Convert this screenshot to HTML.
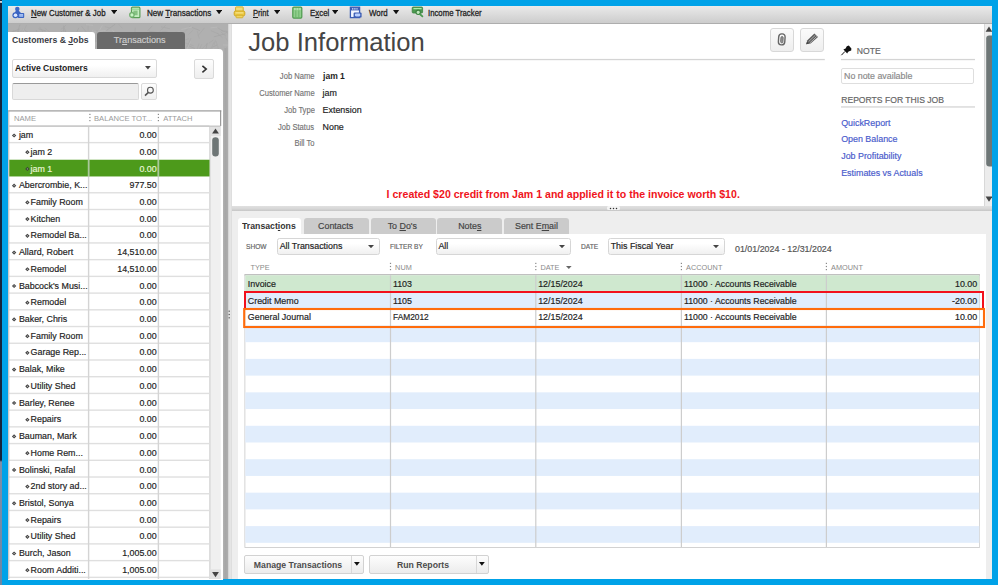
<!DOCTYPE html>
<html lang="en"><head><meta charset="utf-8"><title>Customer Center - Job Information</title>
<style>
html,body{margin:0;padding:0;width:998px;height:585px;overflow:hidden;background:#00a2e8;}
body{position:relative;font-family:"Liberation Sans",Arial,Helvetica,sans-serif;}
.b{position:absolute;display:block;}
.t{position:absolute;white-space:pre;}
u{text-decoration:underline;text-underline-offset:1px;text-decoration-thickness:0.8px;}
</style></head><body>
<div class="b" style="left:0.00px;top:0.00px;width:998.00px;height:585.00px;background:#00a2e8;"></div>
<div class="b" style="left:0.00px;top:0.00px;width:2.00px;height:585.00px;background:linear-gradient(#15233b 0,#15233b 1px,#d8d8d8 1.4px,#d8d8d8 2.4px,#15233b 3px,#15233b 460px,#7f8ea8 462px,#6a86a6 585px);"></div>
<div class="b" style="left:8.00px;top:6.00px;width:984.00px;height:573.00px;background:#eeeeee;"></div>
<div class="b" style="left:8.00px;top:6.00px;width:984.00px;height:18.00px;background:linear-gradient(#eaeaea 0,#e3e3e3 22%,#d4d4d4 70%,#cdcdcd 93%,#adadad 97%,#b4b4b4 100%);"></div>
<div class="b" style="left:8.00px;top:24.00px;width:219.60px;height:555.00px;background:#b0b0b0;"></div>
<svg class="b" style="left:8.00px;top:24.00px" width="220" height="25" viewBox="0 0 220 25"><path d="M70.9 3.8l-2.5 5.0" stroke="#a6a6a6" stroke-width="0.8" fill="none"/><path d="M80.1 1.4l-0.1 5.3" stroke="#aaaaaa" stroke-width="0.8" fill="none"/><path d="M91.6 6.0l-0.9 5.4" stroke="#a6a6a6" stroke-width="0.8" fill="none"/><path d="M207.5 15.8l-1.4 5.3" stroke="#aaaaaa" stroke-width="0.8" fill="none"/><path d="M10.9 5.5l-1.1 6.0" stroke="#aaaaaa" stroke-width="0.8" fill="none"/><path d="M31.6 2.9l6.5 9.5" stroke="#a8a8a8" stroke-width="0.8" fill="none"/><path d="M22.6 14.3l4.8 3.2" stroke="#a6a6a6" stroke-width="0.8" fill="none"/><path d="M123.6 15.5l0.1 9.3" stroke="#b9b9b9" stroke-width="0.8" fill="none"/><path d="M102.0 23.1l2.9 6.3" stroke="#a8a8a8" stroke-width="0.8" fill="none"/><path d="M153.1 6.1l-2.1 9.0" stroke="#b9b9b9" stroke-width="0.8" fill="none"/><path d="M159.7 7.2l-5.9 0.4" stroke="#aaaaaa" stroke-width="0.8" fill="none"/><path d="M36.1 8.6l-8.2 1.7" stroke="#a6a6a6" stroke-width="0.8" fill="none"/><path d="M167.4 14.3l-6.9 2.9" stroke="#b9b9b9" stroke-width="0.8" fill="none"/><path d="M130.2 14.5l1.6 11.6" stroke="#b9b9b9" stroke-width="0.8" fill="none"/><path d="M103.8 16.6l10.4 2.0" stroke="#aaaaaa" stroke-width="0.8" fill="none"/><path d="M62.3 9.6l-2.6 4.5" stroke="#aaaaaa" stroke-width="0.8" fill="none"/><path d="M77.8 15.3l0.1 6.7" stroke="#b9b9b9" stroke-width="0.8" fill="none"/><path d="M28.3 6.2l4.0 11.3" stroke="#a6a6a6" stroke-width="0.8" fill="none"/><path d="M36.4 10.0l3.9 4.7" stroke="#aaaaaa" stroke-width="0.8" fill="none"/><path d="M189.2 7.0l2.1 7.6" stroke="#aaaaaa" stroke-width="0.8" fill="none"/><path d="M209.7 3.8l5.8 3.6" stroke="#a8a8a8" stroke-width="0.8" fill="none"/><path d="M2.6 20.8l6.1 3.9" stroke="#a8a8a8" stroke-width="0.8" fill="none"/><path d="M91.7 9.2l-2.6 12.4" stroke="#a6a6a6" stroke-width="0.8" fill="none"/><path d="M100.0 21.8l-10.3 1.6" stroke="#aaaaaa" stroke-width="0.8" fill="none"/><path d="M87.2 9.9l0.5 8.2" stroke="#a8a8a8" stroke-width="0.8" fill="none"/><path d="M14.7 5.2l6.7 3.8" stroke="#a6a6a6" stroke-width="0.8" fill="none"/><path d="M22.4 14.2l-1.4 12.5" stroke="#a6a6a6" stroke-width="0.8" fill="none"/><path d="M15.4 5.2l3.8 9.3" stroke="#b9b9b9" stroke-width="0.8" fill="none"/><path d="M131.9 11.9l8.3 3.2" stroke="#aaaaaa" stroke-width="0.8" fill="none"/><path d="M105.2 7.8l9.9 4.8" stroke="#b9b9b9" stroke-width="0.8" fill="none"/><path d="M104.8 17.3l-0.3 6.6" stroke="#b9b9b9" stroke-width="0.8" fill="none"/><path d="M32.1 13.6l9.2 0.8" stroke="#a6a6a6" stroke-width="0.8" fill="none"/><path d="M152.5 6.5l2.6 5.8" stroke="#a8a8a8" stroke-width="0.8" fill="none"/><path d="M116.6 19.5l3.5 5.8" stroke="#a8a8a8" stroke-width="0.8" fill="none"/><path d="M176.5 20.5l-4.7 5.0" stroke="#aaaaaa" stroke-width="0.8" fill="none"/><path d="M77.9 0.7l7.2 0.6" stroke="#b9b9b9" stroke-width="0.8" fill="none"/><path d="M42.4 15.1l5.4 10.1" stroke="#b9b9b9" stroke-width="0.8" fill="none"/><path d="M209.1 9.1l5.2 4.4" stroke="#a8a8a8" stroke-width="0.8" fill="none"/><path d="M74.0 12.1l-9.9 0.5" stroke="#a6a6a6" stroke-width="0.8" fill="none"/><path d="M105.0 16.3l-4.6 3.3" stroke="#a6a6a6" stroke-width="0.8" fill="none"/><path d="M199.2 19.6l-6.2 6.2" stroke="#a8a8a8" stroke-width="0.8" fill="none"/><path d="M95.0 15.9l12.1 3.4" stroke="#aaaaaa" stroke-width="0.8" fill="none"/><path d="M101.4 18.6l6.0 1.7" stroke="#a8a8a8" stroke-width="0.8" fill="none"/><path d="M6.0 14.8l1.1 10.2" stroke="#aaaaaa" stroke-width="0.8" fill="none"/><path d="M143.9 8.8l-0.9 6.0" stroke="#a6a6a6" stroke-width="0.8" fill="none"/><path d="M175.1 18.2l10.4 3.5" stroke="#a8a8a8" stroke-width="0.8" fill="none"/><path d="M95.0 21.8l-5.7 3.5" stroke="#b9b9b9" stroke-width="0.8" fill="none"/><path d="M46.6 12.5l-5.6 5.1" stroke="#aaaaaa" stroke-width="0.8" fill="none"/><path d="M182.7 1.5l-8.3 8.9" stroke="#aaaaaa" stroke-width="0.8" fill="none"/><path d="M181.1 22.0l5.7 2.5" stroke="#a6a6a6" stroke-width="0.8" fill="none"/><path d="M191.1 19.4l-3.7 10.6" stroke="#a8a8a8" stroke-width="0.8" fill="none"/><path d="M37.7 11.8l-6.1 7.2" stroke="#b9b9b9" stroke-width="0.8" fill="none"/><path d="M149.4 13.3l0.6 11.2" stroke="#a6a6a6" stroke-width="0.8" fill="none"/><path d="M54.4 6.9l-6.8 5.9" stroke="#a6a6a6" stroke-width="0.8" fill="none"/><path d="M166.4 22.8l1.8 9.7" stroke="#a8a8a8" stroke-width="0.8" fill="none"/><path d="M151.7 11.3l-0.9 8.8" stroke="#a8a8a8" stroke-width="0.8" fill="none"/><path d="M153.1 21.9l-7.0 1.3" stroke="#a8a8a8" stroke-width="0.8" fill="none"/><path d="M184.0 3.4l7.9 3.2" stroke="#a6a6a6" stroke-width="0.8" fill="none"/><path d="M147.0 10.7l5.8 4.6" stroke="#a6a6a6" stroke-width="0.8" fill="none"/><path d="M196.4 3.9l-6.5 8.0" stroke="#a8a8a8" stroke-width="0.8" fill="none"/><path d="M55.4 3.4l1.1 10.9" stroke="#a6a6a6" stroke-width="0.8" fill="none"/><path d="M87.2 12.2l-11.7 0.4" stroke="#a8a8a8" stroke-width="0.8" fill="none"/><path d="M154.7 24.9l2.5 8.0" stroke="#b9b9b9" stroke-width="0.8" fill="none"/><path d="M69.8 18.1l9.4 0.6" stroke="#aaaaaa" stroke-width="0.8" fill="none"/><path d="M154.0 9.6l-0.4 7.4" stroke="#a6a6a6" stroke-width="0.8" fill="none"/><path d="M24.7 23.0l9.0 7.9" stroke="#a6a6a6" stroke-width="0.8" fill="none"/><path d="M58.2 1.0l-5.5 4.6" stroke="#a8a8a8" stroke-width="0.8" fill="none"/><path d="M179.5 21.2l-6.6 10.7" stroke="#aaaaaa" stroke-width="0.8" fill="none"/><path d="M32.7 23.0l-2.3 10.3" stroke="#a6a6a6" stroke-width="0.8" fill="none"/><path d="M61.1 20.0l10.2 6.6" stroke="#b9b9b9" stroke-width="0.8" fill="none"/><path d="M205.5 15.9l-4.6 3.3" stroke="#a8a8a8" stroke-width="0.8" fill="none"/><path d="M14.6 21.6l1.1 7.6" stroke="#aaaaaa" stroke-width="0.8" fill="none"/><path d="M202.9 6.7l8.5 3.6" stroke="#a8a8a8" stroke-width="0.8" fill="none"/><path d="M205.4 24.2l4.4 4.7" stroke="#b9b9b9" stroke-width="0.8" fill="none"/><path d="M137.7 13.3l6.8 5.2" stroke="#a8a8a8" stroke-width="0.8" fill="none"/><path d="M59.2 20.1l-5.3 0.1" stroke="#a6a6a6" stroke-width="0.8" fill="none"/><path d="M160.5 13.8l7.3 4.9" stroke="#aaaaaa" stroke-width="0.8" fill="none"/><path d="M23.3 20.5l1.9 8.8" stroke="#aaaaaa" stroke-width="0.8" fill="none"/><path d="M212.5 7.7l5.3 4.3" stroke="#a8a8a8" stroke-width="0.8" fill="none"/><path d="M182.3 17.7l-3.4 7.5" stroke="#b9b9b9" stroke-width="0.8" fill="none"/><path d="M215.0 20.9l10.0 0.4" stroke="#b9b9b9" stroke-width="0.8" fill="none"/><path d="M94.3 1.4l-4.0 7.0" stroke="#b9b9b9" stroke-width="0.8" fill="none"/><path d="M131.1 17.3l6.4 0.9" stroke="#b9b9b9" stroke-width="0.8" fill="none"/><path d="M97.6 6.6l-12.7 1.5" stroke="#b9b9b9" stroke-width="0.8" fill="none"/><path d="M53.5 24.1l4.4 6.5" stroke="#a6a6a6" stroke-width="0.8" fill="none"/><path d="M73.4 2.1l6.6 7.9" stroke="#a8a8a8" stroke-width="0.8" fill="none"/><path d="M110.5 0.1l3.9 4.2" stroke="#aaaaaa" stroke-width="0.8" fill="none"/><path d="M128.5 9.8l5.9 8.1" stroke="#a6a6a6" stroke-width="0.8" fill="none"/><path d="M128.2 13.2l-7.3 7.2" stroke="#aaaaaa" stroke-width="0.8" fill="none"/><path d="M167.4 18.0l0.1 7.3" stroke="#a8a8a8" stroke-width="0.8" fill="none"/><path d="M9.6 20.9l-9.4 3.3" stroke="#a8a8a8" stroke-width="0.8" fill="none"/><path d="M199.3 18.8l-2.5 11.2" stroke="#a6a6a6" stroke-width="0.8" fill="none"/><path d="M181.0 14.6l-9.9 3.5" stroke="#a8a8a8" stroke-width="0.8" fill="none"/><path d="M18.6 1.0l-5.3 11.5" stroke="#aaaaaa" stroke-width="0.8" fill="none"/><path d="M183.0 14.0l-3.9 9.2" stroke="#a8a8a8" stroke-width="0.8" fill="none"/><path d="M107.2 0.1l-8.8 6.5" stroke="#a6a6a6" stroke-width="0.8" fill="none"/><path d="M144.4 1.7l-4.8 5.2" stroke="#a6a6a6" stroke-width="0.8" fill="none"/><path d="M185.3 5.9l-4.9 4.7" stroke="#aaaaaa" stroke-width="0.8" fill="none"/><path d="M108.2 9.6l0.7 10.4" stroke="#a6a6a6" stroke-width="0.8" fill="none"/><path d="M135.1 16.1l6.0 1.5" stroke="#b9b9b9" stroke-width="0.8" fill="none"/><path d="M142.7 17.3l-2.3 5.6" stroke="#aaaaaa" stroke-width="0.8" fill="none"/><path d="M13.3 6.7l-5.4 9.0" stroke="#aaaaaa" stroke-width="0.8" fill="none"/><path d="M63.7 12.9l1.0 8.7" stroke="#a6a6a6" stroke-width="0.8" fill="none"/><path d="M217.5 13.7l3.2 4.7" stroke="#aaaaaa" stroke-width="0.8" fill="none"/><path d="M3.8 11.5l-10.8 6.8" stroke="#aaaaaa" stroke-width="0.8" fill="none"/><path d="M217.7 9.7l-12.0 3.2" stroke="#a6a6a6" stroke-width="0.8" fill="none"/><path d="M127.3 3.5l-1.0 12.6" stroke="#a8a8a8" stroke-width="0.8" fill="none"/><path d="M132.1 15.8l3.8 4.5" stroke="#b9b9b9" stroke-width="0.8" fill="none"/><path d="M50.7 22.4l0.2 5.2" stroke="#a6a6a6" stroke-width="0.8" fill="none"/><path d="M208.0 17.0l3.2 10.3" stroke="#aaaaaa" stroke-width="0.8" fill="none"/><path d="M75.3 7.9l-4.4 2.4" stroke="#b9b9b9" stroke-width="0.8" fill="none"/><path d="M183.8 3.0l-10.4 2.5" stroke="#b9b9b9" stroke-width="0.8" fill="none"/><path d="M55.5 1.6l4.0 11.3" stroke="#a6a6a6" stroke-width="0.8" fill="none"/><path d="M79.0 10.7l3.5 4.1" stroke="#a6a6a6" stroke-width="0.8" fill="none"/><path d="M11.3 16.5l-2.5 5.6" stroke="#b9b9b9" stroke-width="0.8" fill="none"/><path d="M95.5 7.9l-8.5 7.4" stroke="#aaaaaa" stroke-width="0.8" fill="none"/><path d="M193.7 20.3l-4.9 11.3" stroke="#a8a8a8" stroke-width="0.8" fill="none"/><path d="M157.6 1.2l-5.7 6.4" stroke="#a8a8a8" stroke-width="0.8" fill="none"/><path d="M141.1 7.2l12.3 1.9" stroke="#a8a8a8" stroke-width="0.8" fill="none"/><path d="M37.4 10.4l4.5 5.5" stroke="#b9b9b9" stroke-width="0.8" fill="none"/><path d="M89.0 6.0l0.5 10.3" stroke="#a6a6a6" stroke-width="0.8" fill="none"/><path d="M36.6 4.0l9.7 7.4" stroke="#aaaaaa" stroke-width="0.8" fill="none"/><path d="M120.5 11.3l5.6 9.6" stroke="#aaaaaa" stroke-width="0.8" fill="none"/><path d="M30.6 4.8l7.4 2.2" stroke="#a6a6a6" stroke-width="0.8" fill="none"/><path d="M69.9 9.2l-5.5 3.7" stroke="#a6a6a6" stroke-width="0.8" fill="none"/><path d="M164.2 10.3l2.5 8.9" stroke="#aaaaaa" stroke-width="0.8" fill="none"/><path d="M59.2 18.8l0.1 9.6" stroke="#b9b9b9" stroke-width="0.8" fill="none"/><path d="M27.6 12.6l-4.7 10.9" stroke="#a8a8a8" stroke-width="0.8" fill="none"/><path d="M20.3 22.4l3.6 9.5" stroke="#aaaaaa" stroke-width="0.8" fill="none"/><path d="M208.9 21.2l-4.8 2.0" stroke="#a6a6a6" stroke-width="0.8" fill="none"/><path d="M93.1 19.1l-10.4 7.4" stroke="#aaaaaa" stroke-width="0.8" fill="none"/><path d="M0.0 9.8l-11.3 2.6" stroke="#aaaaaa" stroke-width="0.8" fill="none"/><path d="M212.9 6.2l5.9 2.1" stroke="#a6a6a6" stroke-width="0.8" fill="none"/><path d="M206.2 18.0l-5.0 9.9" stroke="#aaaaaa" stroke-width="0.8" fill="none"/><path d="M18.6 19.4l6.0 0.0" stroke="#a6a6a6" stroke-width="0.8" fill="none"/><path d="M141.4 7.6l6.5 2.7" stroke="#aaaaaa" stroke-width="0.8" fill="none"/><path d="M153.0 2.8l9.0 2.0" stroke="#a8a8a8" stroke-width="0.8" fill="none"/><path d="M85.0 5.6l-1.6 4.8" stroke="#b9b9b9" stroke-width="0.8" fill="none"/><path d="M218.2 7.0l6.4 9.8" stroke="#a8a8a8" stroke-width="0.8" fill="none"/><path d="M104.1 5.9l9.1 8.9" stroke="#b9b9b9" stroke-width="0.8" fill="none"/><path d="M12.1 4.9l-9.5 3.6" stroke="#a6a6a6" stroke-width="0.8" fill="none"/><path d="M56.3 16.7l-6.6 1.6" stroke="#a6a6a6" stroke-width="0.8" fill="none"/><path d="M152.4 18.0l3.4 7.4" stroke="#a6a6a6" stroke-width="0.8" fill="none"/><path d="M174.6 18.5l-0.1 6.6" stroke="#a8a8a8" stroke-width="0.8" fill="none"/><path d="M68.3 20.5l5.1 4.5" stroke="#b9b9b9" stroke-width="0.8" fill="none"/><path d="M23.9 15.6l-4.1 11.5" stroke="#aaaaaa" stroke-width="0.8" fill="none"/><path d="M91.3 16.6l-6.1 1.0" stroke="#aaaaaa" stroke-width="0.8" fill="none"/><path d="M11.9 0.6l-2.5 7.9" stroke="#a6a6a6" stroke-width="0.8" fill="none"/><path d="M40.3 11.2l-4.6 5.9" stroke="#a6a6a6" stroke-width="0.8" fill="none"/><path d="M218.5 23.3l3.3 5.6" stroke="#aaaaaa" stroke-width="0.8" fill="none"/><path d="M7.0 16.6l3.0 7.4" stroke="#b9b9b9" stroke-width="0.8" fill="none"/><path d="M96.9 2.7l5.5 1.4" stroke="#aaaaaa" stroke-width="0.8" fill="none"/><path d="M209.3 3.1l-6.6 0.7" stroke="#b9b9b9" stroke-width="0.8" fill="none"/><path d="M168.4 7.7l-4.7 3.3" stroke="#aaaaaa" stroke-width="0.8" fill="none"/><path d="M42.9 13.5l1.3 7.5" stroke="#aaaaaa" stroke-width="0.8" fill="none"/><path d="M6.6 10.3l-9.2 6.2" stroke="#a6a6a6" stroke-width="0.8" fill="none"/><path d="M82.2 11.6l-4.5 3.2" stroke="#a8a8a8" stroke-width="0.8" fill="none"/><path d="M163.7 22.5l3.5 6.3" stroke="#a6a6a6" stroke-width="0.8" fill="none"/><path d="M57.4 17.9l3.9 6.0" stroke="#a6a6a6" stroke-width="0.8" fill="none"/><path d="M158.0 14.9l-10.3 7.2" stroke="#a6a6a6" stroke-width="0.8" fill="none"/><path d="M5.3 5.8l1.0 12.6" stroke="#aaaaaa" stroke-width="0.8" fill="none"/><path d="M173.0 22.8l-5.1 3.3" stroke="#aaaaaa" stroke-width="0.8" fill="none"/><path d="M40.1 20.1l-7.9 8.5" stroke="#a8a8a8" stroke-width="0.8" fill="none"/><path d="M133.0 8.2l4.2 6.7" stroke="#a6a6a6" stroke-width="0.8" fill="none"/><path d="M112.1 9.8l7.2 4.0" stroke="#a6a6a6" stroke-width="0.8" fill="none"/><path d="M105.5 13.6l7.4 4.1" stroke="#a6a6a6" stroke-width="0.8" fill="none"/><path d="M216.3 6.6l5.6 1.5" stroke="#aaaaaa" stroke-width="0.8" fill="none"/><path d="M216.5 24.3l5.2 3.1" stroke="#aaaaaa" stroke-width="0.8" fill="none"/><path d="M135.8 16.9l-8.3 8.4" stroke="#a6a6a6" stroke-width="0.8" fill="none"/><path d="M170.8 7.3l4.6 5.5" stroke="#b9b9b9" stroke-width="0.8" fill="none"/></svg>
<div class="b" style="left:223.40px;top:48.00px;width:4.20px;height:531.00px;background:linear-gradient(90deg,#b2b2b2,#a6a6a6 45%,#adadad);"></div>
<div class="b" style="left:227.50px;top:24.00px;width:4.00px;height:555.00px;background:linear-gradient(90deg,#d0d0d0,#e9e9e9 50%,#dadada);"></div>
<div class="t" style="top:5.50px;font-size:9.8px;line-height:14px;color:#222;left:31.20px;transform:scaleX(0.805);transform-origin:0 50%;-webkit-text-stroke:0.3px #222;text-underline-offset:0.3px;"><u>N</u>ew Customer &amp; Job</div>
<svg class="b" style="left:110.60px;top:10.20px" width="6.2" height="4.3" viewBox="0 0 6.2 4.3"><path d="M0 0H6.2L3.1 4.3Z" fill="#111"/></svg>
<div class="t" style="top:5.50px;font-size:9.8px;line-height:14px;color:#222;left:146.60px;transform:scaleX(0.827);transform-origin:0 50%;-webkit-text-stroke:0.3px #222;text-underline-offset:0.3px;">New <u>T</u>ransactions</div>
<svg class="b" style="left:216.00px;top:10.20px" width="6.2" height="4.3" viewBox="0 0 6.2 4.3"><path d="M0 0H6.2L3.1 4.3Z" fill="#111"/></svg>
<div class="t" style="top:5.50px;font-size:9.8px;line-height:14px;color:#222;left:252.70px;transform:scaleX(0.775);transform-origin:0 50%;-webkit-text-stroke:0.3px #222;text-underline-offset:0.3px;"><u>P</u>rint</div>
<svg class="b" style="left:273.80px;top:10.20px" width="6.2" height="4.3" viewBox="0 0 6.2 4.3"><path d="M0 0H6.2L3.1 4.3Z" fill="#111"/></svg>
<div class="t" style="top:5.50px;font-size:9.8px;line-height:14px;color:#222;left:309.60px;transform:scaleX(0.805);transform-origin:0 50%;-webkit-text-stroke:0.3px #222;text-underline-offset:0.3px;">E<u>x</u>cel</div>
<svg class="b" style="left:332.20px;top:10.20px" width="6.2" height="4.3" viewBox="0 0 6.2 4.3"><path d="M0 0H6.2L3.1 4.3Z" fill="#111"/></svg>
<div class="t" style="top:5.50px;font-size:9.8px;line-height:14px;color:#222;left:369.00px;transform:scaleX(0.805);transform-origin:0 50%;-webkit-text-stroke:0.3px #222;text-underline-offset:0.3px;">Word</div>
<svg class="b" style="left:393.40px;top:10.20px" width="6.2" height="4.3" viewBox="0 0 6.2 4.3"><path d="M0 0H6.2L3.1 4.3Z" fill="#111"/></svg>
<div class="t" style="top:5.50px;font-size:9.8px;line-height:14px;color:#222;left:428.40px;transform:scaleX(0.793);transform-origin:0 50%;-webkit-text-stroke:0.3px #222;text-underline-offset:0.3px;">Income Tracker</div>
<svg class="b" style="left:11.00px;top:6.00px" width="15" height="13" viewBox="0 0 15 13"><circle cx="6.3" cy="2.9" r="2.25" fill="#3f69c6"/>
<path d="M5 4.4H7.6L10.4 7.4L2.4 9Z" fill="#3a64c2"/>
<circle cx="4.4" cy="9.3" r="3" fill="#3a64c2"/>
<rect x="6.8" y="6.9" width="6.4" height="5" rx="0.9" fill="#3a64c2"/>
<rect x="8.3" y="8.1" width="3.8" height="2.6" fill="#b4ccf8"/><path d="M8.3 9.4H12.1" stroke="#7fa2e8" stroke-width=".6"/>
<circle cx="4.5" cy="9.3" r="1.8" fill="#dce8ff"/></svg>
<svg class="b" style="left:127.00px;top:6.00px" width="15" height="13" viewBox="0 0 15 13"><rect x="4.5" y="1.2" width="8.4" height="10.5" rx="1" fill="#c4edc0" stroke="#5a9e56" stroke-width="1.2"/>
<rect x="6.4" y="4.6" width="4.2" height="4.6" fill="#86c283"/>
<path d="M4.6 3.2H12.2" stroke="#8fd08b" stroke-width="1"/>
<circle cx="4.9" cy="8.9" r="2.8" fill="#6fae6b"/><circle cx="4.9" cy="8.9" r="1.6" fill="#c8f5c4"/></svg>
<svg class="b" style="left:233.00px;top:6.00px" width="13" height="13" viewBox="0 0 13 13"><rect x="2.6" y="0.9" width="7.6" height="4.6" rx="0.6" fill="#f2dc7c" stroke="#d2ae2a" stroke-width="1"/>
<rect x="1.2" y="5" width="10.6" height="4.8" rx="1.4" fill="#ecc83e" stroke="#cfa622" stroke-width="1"/>
<rect x="3" y="9.2" width="7" height="2.6" rx="0.8" fill="#f0d462" stroke="#d2ae2a" stroke-width=".9"/>
<rect x="2.4" y="6.4" width="8" height="1" fill="#f8e9a0"/></svg>
<svg class="b" style="left:291.00px;top:6.00px" width="13" height="13" viewBox="0 0 13 13"><rect x="1.8" y="1.1" width="9" height="11" rx="1" fill="#8fcf8c" stroke="#4d9a4d" stroke-width="1.2"/>
<path d="M4.8 4.4V11.4M7.8 4.4V11.4" stroke="#6cb36a" stroke-width="1"/><path d="M3 3H10" stroke="#d8f2d6" stroke-width="1.2" stroke-dasharray="1.6 1"/></svg>
<svg class="b" style="left:349.00px;top:6.00px" width="14" height="13" viewBox="0 0 14 13"><rect x="1.4" y="1.2" width="9.2" height="10.4" fill="#f2f6ff" stroke="#3b5db4" stroke-width="1.3"/>
<rect x="1.4" y="1.2" width="9.2" height="3.2" fill="#3b5db4"/><path d="M3 2.8H8.6" stroke="#dbe6ff" stroke-width="1.2" stroke-dasharray="1.4 .8"/>
<rect x="4.6" y="6.4" width="8" height="5.2" rx="1.2" fill="#3b5db4"/><rect x="5.8" y="7.6" width="5.6" height="2.8" rx="1.3" fill="#b9d0ff"/></svg>
<svg class="b" style="left:411.00px;top:6.00px" width="14" height="12" viewBox="0 0 14 12"><rect x="1.2" y="1" width="10.4" height="6" rx="1" fill="#4c9a50" stroke="#3c8140" stroke-width=".8"/>
<path d="M2.4 2.6H10.6" stroke="#a9ecaa" stroke-width="1.3"/>
<circle cx="7.2" cy="6.3" r="2.2" fill="#bfe9bd" stroke="#3c8140" stroke-width="1.1"/>
<path d="M8.8 8L11.4 10.4" stroke="#4c9a50" stroke-width="1.8" stroke-linecap="round"/></svg>
<div class="b" style="left:8.00px;top:31.80px;width:87.00px;height:18.00px;background:#fff;border-radius:0 3px 0 0;"></div>
<div class="b" style="left:97.00px;top:32.00px;width:88.00px;height:16.60px;background:#6a6a6a;border-radius:3px 3px 0 0;"></div>
<div class="t" style="top:33.28px;font-size:9px;line-height:14px;color:#3a3c44;font-weight:700;left:11.60px;transform:scaleX(0.962);transform-origin:0 50%;">Customers &amp; <u>J</u>obs</div>
<div class="t" style="top:33.05px;font-size:9.1px;line-height:14px;color:#cdcdcd;left:-10.30px;width:300px;text-align:center;-webkit-text-stroke:0.18px #cdcdcd;">Tr<u>a</u>nsactions</div>
<div class="b" style="left:8.00px;top:48.50px;width:215.40px;height:531.00px;background:#fff;border-radius:0 4px 0 0;"></div>
<div class="b" style="left:12.30px;top:59.00px;width:144.80px;height:18.80px;background:linear-gradient(#fff 30%,#f0f0f0);border:1px solid #dadada;border-radius:2px;box-sizing:border-box;"></div>
<div class="t" style="top:61.08px;font-size:9px;line-height:14px;color:#1c1c1c;font-weight:700;left:14.70px;transform:scaleX(0.95);transform-origin:0 50%;">Active Customers</div>
<svg class="b" style="left:145.20px;top:66.30px" width="5.8" height="3.6" viewBox="0 0 5.8 3.6"><path d="M0 0H5.8L2.9 3.6Z" fill="#444"/></svg>
<div class="b" style="left:194.40px;top:59.40px;width:19.40px;height:19.40px;background:linear-gradient(#fdfdfd,#eeeeee);border:1px solid #dadada;border-radius:2px;box-sizing:border-box;"></div>
<svg class="b" style="left:200.00px;top:64.00px" width="9" height="10" viewBox="0 0 9 10"><path d="M2.4 1.9L6.2 5.1L2.4 8.3" fill="none" stroke="#333" stroke-width="1.6"/></svg>
<div class="b" style="left:12.20px;top:83.40px;width:126.80px;height:16.20px;background:#eeeeee;border:1px solid #d8d8d8;border-top:1px solid #999;border-radius:2px;box-sizing:border-box;"></div>
<div class="b" style="left:140.80px;top:83.30px;width:16.00px;height:16.60px;background:linear-gradient(#fdfdfd,#f0f0f0);border:1px solid #dadada;border-radius:2px;box-sizing:border-box;"></div>
<svg class="b" style="left:143.00px;top:85.00px" width="13" height="13" viewBox="0 0 13 13"><circle cx="7.4" cy="5.2" r="2.9" fill="none" stroke="#555" stroke-width="1.1"/><path d="M5.4 7.4L2 10.6" stroke="#555" stroke-width="1.5"/></svg>
<svg class="b" style="left:8.00px;top:108.00px" width="216" height="471" viewBox="0 0 216 471"><rect x="201.60" y="18.00" width="11.20" height="453.00" fill="#f0f0f0" /><rect x="201.40" y="18.00" width="1.00" height="453.00" fill="#cacaca" /><rect x="202.40" y="18.00" width="10.40" height="10.00" fill="#e2e2e2" /><rect x="202.40" y="461.40" width="10.40" height="9.60" fill="#e2e2e2" /><rect x="1.10" y="51.74" width="200.40" height="16.72" fill="#4d9a1b" /><rect x="1.10" y="17.20" width="200.40" height="1.40" fill="#dfdfdf" /><rect x="1.10" y="33.92" width="200.40" height="1.40" fill="#dfdfdf" /><rect x="1.10" y="84.08" width="200.40" height="1.40" fill="#dfdfdf" /><rect x="1.10" y="100.80" width="200.40" height="1.40" fill="#dfdfdf" /><rect x="1.10" y="117.52" width="200.40" height="1.40" fill="#dfdfdf" /><rect x="1.10" y="134.24" width="200.40" height="1.40" fill="#dfdfdf" /><rect x="1.10" y="150.96" width="200.40" height="1.40" fill="#dfdfdf" /><rect x="1.10" y="167.68" width="200.40" height="1.40" fill="#dfdfdf" /><rect x="1.10" y="184.40" width="200.40" height="1.40" fill="#dfdfdf" /><rect x="1.10" y="201.12" width="200.40" height="1.40" fill="#dfdfdf" /><rect x="1.10" y="217.84" width="200.40" height="1.40" fill="#dfdfdf" /><rect x="1.10" y="234.56" width="200.40" height="1.40" fill="#dfdfdf" /><rect x="1.10" y="251.28" width="200.40" height="1.40" fill="#dfdfdf" /><rect x="1.10" y="268.00" width="200.40" height="1.40" fill="#dfdfdf" /><rect x="1.10" y="284.72" width="200.40" height="1.40" fill="#dfdfdf" /><rect x="1.10" y="301.44" width="200.40" height="1.40" fill="#dfdfdf" /><rect x="1.10" y="318.16" width="200.40" height="1.40" fill="#dfdfdf" /><rect x="1.10" y="334.88" width="200.40" height="1.40" fill="#dfdfdf" /><rect x="1.10" y="351.60" width="200.40" height="1.40" fill="#dfdfdf" /><rect x="1.10" y="368.32" width="200.40" height="1.40" fill="#dfdfdf" /><rect x="1.10" y="385.04" width="200.40" height="1.40" fill="#dfdfdf" /><rect x="1.10" y="401.76" width="200.40" height="1.40" fill="#dfdfdf" /><rect x="1.10" y="418.48" width="200.40" height="1.40" fill="#dfdfdf" /><rect x="1.10" y="435.20" width="200.40" height="1.40" fill="#dfdfdf" /><rect x="1.10" y="451.92" width="200.40" height="1.40" fill="#dfdfdf" /><rect x="1.10" y="468.64" width="200.40" height="1.40" fill="#dfdfdf" /><rect x="79.90" y="18.00" width="1.40" height="453.00" fill="#d4d4d4" /><rect x="79.90" y="51.84" width="1.40" height="16.72" fill="#a9c99a" /><rect x="149.70" y="18.00" width="1.40" height="453.00" fill="#d4d4d4" /><rect x="149.70" y="51.84" width="1.40" height="16.72" fill="#a9c99a" /><rect x="0.20" y="2.40" width="1.10" height="469.00" fill="#bebebe" /><rect x="0.30" y="2.30" width="213.00" height="1.20" fill="#9a9a9a" /><rect x="212.10" y="2.60" width="1.10" height="15.40" fill="#8f8f8f" /><rect x="1.10" y="17.50" width="211.20" height="1.40" fill="#c8c8c8" /><rect x="81.30" y="5.80" width="1.20" height="1.20" fill="#8a8a8a" /><rect x="81.30" y="8.90" width="1.20" height="1.20" fill="#8a8a8a" /><rect x="81.30" y="12.00" width="1.20" height="1.20" fill="#8a8a8a" /><rect x="149.80" y="5.80" width="1.20" height="1.20" fill="#8a8a8a" /><rect x="149.80" y="8.90" width="1.20" height="1.20" fill="#8a8a8a" /><rect x="149.80" y="12.00" width="1.20" height="1.20" fill="#8a8a8a" /><path d="M207.5 20.4L210.9 25.6H204.1Z" fill="#444"/><rect x="204.2" y="29.3" width="6.6" height="19.2" rx="3.2" fill="#6e7676"/><path d="M204.1 464H210.9L207.5 469.2Z" fill="#444"/><path d="M6.10 25.40L8.30 27.50L6.10 29.60L3.90 27.50Z" fill="#444"/><rect x="5.60" y="27.00" width="1" height="1" fill="#cfcfcf"/><path d="M19.40 42.12L21.60 44.22L19.40 46.32L17.20 44.22Z" fill="#444"/><rect x="18.90" y="43.72" width="1" height="1" fill="#cfcfcf"/><path d="M19.40 58.84L21.60 60.94L19.40 63.04L17.20 60.94Z" fill="#3c4636"/><rect x="18.90" y="60.44" width="1" height="1" fill="#a8c898"/><path d="M6.10 75.56L8.30 77.66L6.10 79.76L3.90 77.66Z" fill="#444"/><rect x="5.60" y="77.16" width="1" height="1" fill="#cfcfcf"/><path d="M19.40 92.28L21.60 94.38L19.40 96.48L17.20 94.38Z" fill="#444"/><rect x="18.90" y="93.88" width="1" height="1" fill="#cfcfcf"/><path d="M19.40 109.00L21.60 111.10L19.40 113.20L17.20 111.10Z" fill="#444"/><rect x="18.90" y="110.60" width="1" height="1" fill="#cfcfcf"/><path d="M19.40 125.72L21.60 127.82L19.40 129.92L17.20 127.82Z" fill="#444"/><rect x="18.90" y="127.32" width="1" height="1" fill="#cfcfcf"/><path d="M6.10 142.44L8.30 144.54L6.10 146.64L3.90 144.54Z" fill="#444"/><rect x="5.60" y="144.04" width="1" height="1" fill="#cfcfcf"/><path d="M19.40 159.16L21.60 161.26L19.40 163.36L17.20 161.26Z" fill="#444"/><rect x="18.90" y="160.76" width="1" height="1" fill="#cfcfcf"/><path d="M6.10 175.88L8.30 177.98L6.10 180.08L3.90 177.98Z" fill="#444"/><rect x="5.60" y="177.48" width="1" height="1" fill="#cfcfcf"/><path d="M19.40 192.60L21.60 194.70L19.40 196.80L17.20 194.70Z" fill="#444"/><rect x="18.90" y="194.20" width="1" height="1" fill="#cfcfcf"/><path d="M6.10 209.32L8.30 211.42L6.10 213.52L3.90 211.42Z" fill="#444"/><rect x="5.60" y="210.92" width="1" height="1" fill="#cfcfcf"/><path d="M19.40 226.04L21.60 228.14L19.40 230.24L17.20 228.14Z" fill="#444"/><rect x="18.90" y="227.64" width="1" height="1" fill="#cfcfcf"/><path d="M19.40 242.76L21.60 244.86L19.40 246.96L17.20 244.86Z" fill="#444"/><rect x="18.90" y="244.36" width="1" height="1" fill="#cfcfcf"/><path d="M6.10 259.48L8.30 261.58L6.10 263.68L3.90 261.58Z" fill="#444"/><rect x="5.60" y="261.08" width="1" height="1" fill="#cfcfcf"/><path d="M19.40 276.20L21.60 278.30L19.40 280.40L17.20 278.30Z" fill="#444"/><rect x="18.90" y="277.80" width="1" height="1" fill="#cfcfcf"/><path d="M6.10 292.92L8.30 295.02L6.10 297.12L3.90 295.02Z" fill="#444"/><rect x="5.60" y="294.52" width="1" height="1" fill="#cfcfcf"/><path d="M19.40 309.64L21.60 311.74L19.40 313.84L17.20 311.74Z" fill="#444"/><rect x="18.90" y="311.24" width="1" height="1" fill="#cfcfcf"/><path d="M6.10 326.36L8.30 328.46L6.10 330.56L3.90 328.46Z" fill="#444"/><rect x="5.60" y="327.96" width="1" height="1" fill="#cfcfcf"/><path d="M19.40 343.08L21.60 345.18L19.40 347.28L17.20 345.18Z" fill="#444"/><rect x="18.90" y="344.68" width="1" height="1" fill="#cfcfcf"/><path d="M6.10 359.80L8.30 361.90L6.10 364.00L3.90 361.90Z" fill="#444"/><rect x="5.60" y="361.40" width="1" height="1" fill="#cfcfcf"/><path d="M19.40 376.52L21.60 378.62L19.40 380.72L17.20 378.62Z" fill="#444"/><rect x="18.90" y="378.12" width="1" height="1" fill="#cfcfcf"/><path d="M6.10 393.24L8.30 395.34L6.10 397.44L3.90 395.34Z" fill="#444"/><rect x="5.60" y="394.84" width="1" height="1" fill="#cfcfcf"/><path d="M19.40 409.96L21.60 412.06L19.40 414.16L17.20 412.06Z" fill="#444"/><rect x="18.90" y="411.56" width="1" height="1" fill="#cfcfcf"/><path d="M19.40 426.68L21.60 428.78L19.40 430.88L17.20 428.78Z" fill="#444"/><rect x="18.90" y="428.28" width="1" height="1" fill="#cfcfcf"/><path d="M6.10 443.40L8.30 445.50L6.10 447.60L3.90 445.50Z" fill="#444"/><rect x="5.60" y="445.00" width="1" height="1" fill="#cfcfcf"/><path d="M19.40 460.12L21.60 462.22L19.40 464.32L17.20 462.22Z" fill="#444"/><rect x="18.90" y="461.72" width="1" height="1" fill="#cfcfcf"/></svg>
<div class="t" style="top:112.37px;font-size:7.6px;line-height:14px;color:#9a9a9a;letter-spacing:0.02px;left:14.00px;">NAME</div>
<div class="t" style="top:112.37px;font-size:7.6px;line-height:14px;color:#9a9a9a;letter-spacing:0.02px;left:94.00px;">BALANCE TOT...</div>
<div class="t" style="top:112.37px;font-size:7.6px;line-height:14px;color:#9a9a9a;letter-spacing:0.02px;left:163.20px;">ATTACH</div>
<div class="t" style="top:128.12px;font-size:8.9px;line-height:14px;color:#1e1e1e;left:18.90px;-webkit-text-stroke:0.18px #1e1e1e;">jam</div>
<div class="t" style="top:128.12px;font-size:8.9px;line-height:14px;color:#1e1e1e;right:841.30px;text-align:right;-webkit-text-stroke:0.18px #1e1e1e;">0.00</div>
<div class="t" style="top:144.84px;font-size:8.9px;line-height:14px;color:#1e1e1e;left:30.60px;-webkit-text-stroke:0.18px #1e1e1e;">jam 2</div>
<div class="t" style="top:144.84px;font-size:8.9px;line-height:14px;color:#1e1e1e;right:841.30px;text-align:right;-webkit-text-stroke:0.18px #1e1e1e;">0.00</div>
<div class="t" style="top:161.56px;font-size:8.9px;line-height:14px;color:#eaf6d6;left:30.60px;-webkit-text-stroke:0.18px #eaf6d6;">jam 1</div>
<div class="t" style="top:161.56px;font-size:8.9px;line-height:14px;color:#eaf6d6;right:841.30px;text-align:right;-webkit-text-stroke:0.18px #eaf6d6;">0.00</div>
<div class="t" style="top:178.28px;font-size:8.9px;line-height:14px;color:#1e1e1e;left:18.90px;-webkit-text-stroke:0.18px #1e1e1e;">Abercrombie, K...</div>
<div class="t" style="top:178.28px;font-size:8.9px;line-height:14px;color:#1e1e1e;right:841.30px;text-align:right;-webkit-text-stroke:0.18px #1e1e1e;">977.50</div>
<div class="t" style="top:195.00px;font-size:8.9px;line-height:14px;color:#1e1e1e;left:30.60px;-webkit-text-stroke:0.18px #1e1e1e;">Family Room</div>
<div class="t" style="top:195.00px;font-size:8.9px;line-height:14px;color:#1e1e1e;right:841.30px;text-align:right;-webkit-text-stroke:0.18px #1e1e1e;">0.00</div>
<div class="t" style="top:211.72px;font-size:8.9px;line-height:14px;color:#1e1e1e;left:30.60px;-webkit-text-stroke:0.18px #1e1e1e;">Kitchen</div>
<div class="t" style="top:211.72px;font-size:8.9px;line-height:14px;color:#1e1e1e;right:841.30px;text-align:right;-webkit-text-stroke:0.18px #1e1e1e;">0.00</div>
<div class="t" style="top:228.44px;font-size:8.9px;line-height:14px;color:#1e1e1e;left:30.60px;-webkit-text-stroke:0.18px #1e1e1e;">Remodel Ba...</div>
<div class="t" style="top:228.44px;font-size:8.9px;line-height:14px;color:#1e1e1e;right:841.30px;text-align:right;-webkit-text-stroke:0.18px #1e1e1e;">0.00</div>
<div class="t" style="top:245.16px;font-size:8.9px;line-height:14px;color:#1e1e1e;left:18.90px;-webkit-text-stroke:0.18px #1e1e1e;">Allard, Robert</div>
<div class="t" style="top:245.16px;font-size:8.9px;line-height:14px;color:#1e1e1e;right:841.30px;text-align:right;-webkit-text-stroke:0.18px #1e1e1e;">14,510.00</div>
<div class="t" style="top:261.88px;font-size:8.9px;line-height:14px;color:#1e1e1e;left:30.60px;-webkit-text-stroke:0.18px #1e1e1e;">Remodel</div>
<div class="t" style="top:261.88px;font-size:8.9px;line-height:14px;color:#1e1e1e;right:841.30px;text-align:right;-webkit-text-stroke:0.18px #1e1e1e;">14,510.00</div>
<div class="t" style="top:278.60px;font-size:8.9px;line-height:14px;color:#1e1e1e;left:18.90px;-webkit-text-stroke:0.18px #1e1e1e;">Babcock&#x27;s Musi...</div>
<div class="t" style="top:278.60px;font-size:8.9px;line-height:14px;color:#1e1e1e;right:841.30px;text-align:right;-webkit-text-stroke:0.18px #1e1e1e;">0.00</div>
<div class="t" style="top:295.32px;font-size:8.9px;line-height:14px;color:#1e1e1e;left:30.60px;-webkit-text-stroke:0.18px #1e1e1e;">Remodel</div>
<div class="t" style="top:295.32px;font-size:8.9px;line-height:14px;color:#1e1e1e;right:841.30px;text-align:right;-webkit-text-stroke:0.18px #1e1e1e;">0.00</div>
<div class="t" style="top:312.04px;font-size:8.9px;line-height:14px;color:#1e1e1e;left:18.90px;-webkit-text-stroke:0.18px #1e1e1e;">Baker, Chris</div>
<div class="t" style="top:312.04px;font-size:8.9px;line-height:14px;color:#1e1e1e;right:841.30px;text-align:right;-webkit-text-stroke:0.18px #1e1e1e;">0.00</div>
<div class="t" style="top:328.76px;font-size:8.9px;line-height:14px;color:#1e1e1e;left:30.60px;-webkit-text-stroke:0.18px #1e1e1e;">Family Room</div>
<div class="t" style="top:328.76px;font-size:8.9px;line-height:14px;color:#1e1e1e;right:841.30px;text-align:right;-webkit-text-stroke:0.18px #1e1e1e;">0.00</div>
<div class="t" style="top:345.48px;font-size:8.9px;line-height:14px;color:#1e1e1e;left:30.60px;-webkit-text-stroke:0.18px #1e1e1e;">Garage Rep...</div>
<div class="t" style="top:345.48px;font-size:8.9px;line-height:14px;color:#1e1e1e;right:841.30px;text-align:right;-webkit-text-stroke:0.18px #1e1e1e;">0.00</div>
<div class="t" style="top:362.20px;font-size:8.9px;line-height:14px;color:#1e1e1e;left:18.90px;-webkit-text-stroke:0.18px #1e1e1e;">Balak, Mike</div>
<div class="t" style="top:362.20px;font-size:8.9px;line-height:14px;color:#1e1e1e;right:841.30px;text-align:right;-webkit-text-stroke:0.18px #1e1e1e;">0.00</div>
<div class="t" style="top:378.92px;font-size:8.9px;line-height:14px;color:#1e1e1e;left:30.60px;-webkit-text-stroke:0.18px #1e1e1e;">Utility Shed</div>
<div class="t" style="top:378.92px;font-size:8.9px;line-height:14px;color:#1e1e1e;right:841.30px;text-align:right;-webkit-text-stroke:0.18px #1e1e1e;">0.00</div>
<div class="t" style="top:395.64px;font-size:8.9px;line-height:14px;color:#1e1e1e;left:18.90px;-webkit-text-stroke:0.18px #1e1e1e;">Barley, Renee</div>
<div class="t" style="top:395.64px;font-size:8.9px;line-height:14px;color:#1e1e1e;right:841.30px;text-align:right;-webkit-text-stroke:0.18px #1e1e1e;">0.00</div>
<div class="t" style="top:412.36px;font-size:8.9px;line-height:14px;color:#1e1e1e;left:30.60px;-webkit-text-stroke:0.18px #1e1e1e;">Repairs</div>
<div class="t" style="top:412.36px;font-size:8.9px;line-height:14px;color:#1e1e1e;right:841.30px;text-align:right;-webkit-text-stroke:0.18px #1e1e1e;">0.00</div>
<div class="t" style="top:429.08px;font-size:8.9px;line-height:14px;color:#1e1e1e;left:18.90px;-webkit-text-stroke:0.18px #1e1e1e;">Bauman, Mark</div>
<div class="t" style="top:429.08px;font-size:8.9px;line-height:14px;color:#1e1e1e;right:841.30px;text-align:right;-webkit-text-stroke:0.18px #1e1e1e;">0.00</div>
<div class="t" style="top:445.80px;font-size:8.9px;line-height:14px;color:#1e1e1e;left:30.60px;-webkit-text-stroke:0.18px #1e1e1e;">Home Rem...</div>
<div class="t" style="top:445.80px;font-size:8.9px;line-height:14px;color:#1e1e1e;right:841.30px;text-align:right;-webkit-text-stroke:0.18px #1e1e1e;">0.00</div>
<div class="t" style="top:462.52px;font-size:8.9px;line-height:14px;color:#1e1e1e;left:18.90px;-webkit-text-stroke:0.18px #1e1e1e;">Bolinski, Rafal</div>
<div class="t" style="top:462.52px;font-size:8.9px;line-height:14px;color:#1e1e1e;right:841.30px;text-align:right;-webkit-text-stroke:0.18px #1e1e1e;">0.00</div>
<div class="t" style="top:479.24px;font-size:8.9px;line-height:14px;color:#1e1e1e;left:30.60px;-webkit-text-stroke:0.18px #1e1e1e;">2nd story ad...</div>
<div class="t" style="top:479.24px;font-size:8.9px;line-height:14px;color:#1e1e1e;right:841.30px;text-align:right;-webkit-text-stroke:0.18px #1e1e1e;">0.00</div>
<div class="t" style="top:495.96px;font-size:8.9px;line-height:14px;color:#1e1e1e;left:18.90px;-webkit-text-stroke:0.18px #1e1e1e;">Bristol, Sonya</div>
<div class="t" style="top:495.96px;font-size:8.9px;line-height:14px;color:#1e1e1e;right:841.30px;text-align:right;-webkit-text-stroke:0.18px #1e1e1e;">0.00</div>
<div class="t" style="top:512.68px;font-size:8.9px;line-height:14px;color:#1e1e1e;left:30.60px;-webkit-text-stroke:0.18px #1e1e1e;">Repairs</div>
<div class="t" style="top:512.68px;font-size:8.9px;line-height:14px;color:#1e1e1e;right:841.30px;text-align:right;-webkit-text-stroke:0.18px #1e1e1e;">0.00</div>
<div class="t" style="top:529.40px;font-size:8.9px;line-height:14px;color:#1e1e1e;left:30.60px;-webkit-text-stroke:0.18px #1e1e1e;">Utility Shed</div>
<div class="t" style="top:529.40px;font-size:8.9px;line-height:14px;color:#1e1e1e;right:841.30px;text-align:right;-webkit-text-stroke:0.18px #1e1e1e;">0.00</div>
<div class="t" style="top:546.12px;font-size:8.9px;line-height:14px;color:#1e1e1e;left:18.90px;-webkit-text-stroke:0.18px #1e1e1e;">Burch, Jason</div>
<div class="t" style="top:546.12px;font-size:8.9px;line-height:14px;color:#1e1e1e;right:841.30px;text-align:right;-webkit-text-stroke:0.18px #1e1e1e;">1,005.00</div>
<div class="t" style="top:562.84px;font-size:8.9px;line-height:14px;color:#1e1e1e;left:30.60px;-webkit-text-stroke:0.18px #1e1e1e;">Room Additi...</div>
<div class="t" style="top:562.84px;font-size:8.9px;line-height:14px;color:#1e1e1e;right:841.30px;text-align:right;-webkit-text-stroke:0.18px #1e1e1e;">1,005.00</div>
<div class="b" style="left:231.50px;top:24.00px;width:753.00px;height:181.60px;background:#fff;"></div>
<div class="t" style="top:27.13px;font-size:25.6px;line-height:30px;color:#454545;left:248.30px;">Job Information</div>
<div class="t" style="top:69.22px;font-size:8.9px;line-height:14px;color:#747474;right:683.60px;text-align:right;transform:scaleX(0.855);transform-origin:100% 50%;-webkit-text-stroke:0.15px #747474;">Job Name</div>
<div class="t" style="top:69.18px;font-size:9px;line-height:14px;color:#1e1e1e;font-weight:700;left:322.60px;transform:scaleX(0.95);transform-origin:0 50%;">jam 1</div>
<div class="t" style="top:85.92px;font-size:8.9px;line-height:14px;color:#747474;right:683.60px;text-align:right;transform:scaleX(0.855);transform-origin:100% 50%;-webkit-text-stroke:0.15px #747474;">Customer Name</div>
<div class="t" style="top:85.92px;font-size:8.9px;line-height:14px;color:#1e1e1e;left:322.60px;-webkit-text-stroke:0.18px #1e1e1e;">jam</div>
<div class="t" style="top:102.62px;font-size:8.9px;line-height:14px;color:#747474;right:683.60px;text-align:right;transform:scaleX(0.855);transform-origin:100% 50%;-webkit-text-stroke:0.15px #747474;">Job Type</div>
<div class="t" style="top:102.62px;font-size:8.9px;line-height:14px;color:#1e1e1e;left:322.60px;-webkit-text-stroke:0.18px #1e1e1e;">Extension</div>
<div class="t" style="top:119.92px;font-size:8.9px;line-height:14px;color:#747474;right:683.60px;text-align:right;transform:scaleX(0.855);transform-origin:100% 50%;-webkit-text-stroke:0.15px #747474;">Job Status</div>
<div class="t" style="top:119.92px;font-size:8.9px;line-height:14px;color:#1e1e1e;left:322.60px;-webkit-text-stroke:0.18px #1e1e1e;">None</div>
<div class="t" style="top:136.12px;font-size:8.9px;line-height:14px;color:#747474;right:683.60px;text-align:right;transform:scaleX(0.855);transform-origin:100% 50%;-webkit-text-stroke:0.15px #747474;">Bill To</div>
<div class="b" style="left:770.20px;top:28.00px;width:23.60px;height:23.60px;background:linear-gradient(#fbfbfb,#eeeeee);border:1px solid #d8d8d8;border-radius:3px;box-sizing:border-box;"></div>
<div class="b" style="left:800.40px;top:28.00px;width:24.10px;height:23.60px;background:linear-gradient(#fbfbfb,#eeeeee);border:1px solid #d8d8d8;border-radius:3px;box-sizing:border-box;"></div>
<svg class="b" style="left:776.00px;top:32.00px" width="12" height="16" viewBox="0 0 12 16"><g transform="rotate(4 6 8)"><rect x="2.5" y="1.9" width="6.4" height="11" rx="3.2" fill="none" stroke="#666" stroke-width="1.4"/><rect x="4.8" y="4.6" width="2.2" height="6.2" rx="1.1" fill="#999" stroke="#666" stroke-width="0.9"/></g></svg>
<svg class="b" style="left:805.00px;top:32.00px" width="15" height="15" viewBox="0 0 15 15"><path d="M1.2 12.2L2.4 8.2L9.4 1.6L13 5L5.6 11.4Z" fill="#5c5c5c"/><path d="M3.6 9.6L10.4 3.2M4.9 10.8L11.8 4.4" stroke="#e8e8e8" stroke-width=".6"/><path d="M1.2 12.2L2 9.6L3.8 11.4Z" fill="#444"/></svg>
<svg class="b" style="left:840.00px;top:44.00px" width="14" height="13" viewBox="0 0 14 13"><path d="M1.4 11.2L5 7.4" stroke="#111" stroke-width="1"/><path d="M3.4 5.4L7.2 9.4Q7.8 8.2 8.6 7.6L11.2 6.6L11.4 4.4L8.8 1.6L6.8 2.2L5.6 4.6Q4.4 5.2 3.4 5.4Z" fill="#111"/></svg>
<div class="t" style="top:44.42px;font-size:8.6px;line-height:14px;color:#666;left:856.80px;-webkit-text-stroke:0.18px #666;">NOTE</div>
<div class="b" style="left:841.40px;top:68.20px;width:132.40px;height:15.40px;background:#fff;border:1px solid #dedede;border-radius:2px;box-sizing:border-box;"></div>
<div class="t" style="top:69.03px;font-size:8.85px;line-height:14px;color:#8a8a8a;left:844.00px;-webkit-text-stroke:0.18px #8a8a8a;">No note available</div>
<div class="t" style="top:92.62px;font-size:8.6px;line-height:14px;color:#666;left:841.20px;-webkit-text-stroke:0.18px #666;">REPORTS FOR THIS JOB</div>
<svg class="b" style="left:231.00px;top:55.00px" width="761" height="56" viewBox="0 0 761 56"><rect x="17.20" y="3.90" width="576.60" height="1.30" fill="#d4d4d4" /><rect x="610.00" y="3.90" width="134.00" height="1.30" fill="#d4d4d4" /><rect x="610.00" y="51.30" width="134.00" height="1.30" fill="#d4d4d4" /></svg>
<div class="t" style="top:115.72px;font-size:8.9px;line-height:14px;color:#4a5ccc;left:841.20px;-webkit-text-stroke:0.18px #4a5ccc;">QuickReport</div>
<div class="t" style="top:132.44px;font-size:8.9px;line-height:14px;color:#4a5ccc;left:841.20px;-webkit-text-stroke:0.18px #4a5ccc;">Open Balance</div>
<div class="t" style="top:149.16px;font-size:8.9px;line-height:14px;color:#4a5ccc;left:841.20px;-webkit-text-stroke:0.18px #4a5ccc;">Job Profitability</div>
<div class="t" style="top:165.88px;font-size:8.9px;line-height:14px;color:#4a5ccc;left:841.20px;-webkit-text-stroke:0.18px #4a5ccc;">Estimates vs Actuals</div>
<div class="t" style="top:187.33px;font-size:10.6px;line-height:14px;color:#f01420;font-weight:700;left:386.60px;">I created $20 credit from Jam 1 and applied it to the invoice worth $10.</div>
<div class="b" style="left:984.30px;top:24.00px;width:7.70px;height:181.60px;background:#ececec;border-left:1px solid #d8d8d8;box-sizing:border-box;"></div>
<svg class="b" style="left:984.00px;top:24.00px" width="8" height="182" viewBox="0 0 8 182"><path d="M5 2.6L8.4 7.8H1.6Z" fill="#444"/><rect x="2.2" y="11.6" width="9" height="131" rx="3" fill="#6e7676"/><path d="M1.6 172.6H8.4L5 177.8Z" fill="#444"/></svg>
<svg class="b" style="left:227.00px;top:309.00px" width="5" height="12" viewBox="0 0 5 12"><rect x="1.60" y="1.60" width="1.20" height="1.20" fill="#555" /><rect x="1.60" y="4.90" width="1.20" height="1.20" fill="#555" /><rect x="1.60" y="8.20" width="1.20" height="1.20" fill="#555" /></svg>
<div class="b" style="left:231.50px;top:205.60px;width:760.50px;height:5.60px;background:linear-gradient(#e0e0e0,#d8d8d8 50%,#c6c6c6);"></div>
<div class="b" style="left:607.20px;top:206.20px;width:12.40px;height:4.00px;background:#f4f4f4;border-radius:1.5px;"></div>
<svg class="b" style="left:606.00px;top:205.00px" width="16" height="6" viewBox="0 0 16 6"><circle cx="4.5" cy="3.4" r="0.75" fill="#333"/><circle cx="7.5" cy="3.4" r="0.75" fill="#333"/><circle cx="10.5" cy="3.4" r="0.75" fill="#333"/></svg>
<div class="b" style="left:231.50px;top:211.20px;width:760.50px;height:368.00px;background:#eeeeee;"></div>
<div class="b" style="left:237.60px;top:217.80px;width:63.80px;height:17.50px;background:#fff;border-radius:3px 3px 0 0;"></div>
<div class="b" style="left:304.00px;top:218.40px;width:65.00px;height:15.80px;background:#cbcbcb;border-radius:3px 3px 0 0;"></div>
<div class="b" style="left:370.60px;top:218.40px;width:65.40px;height:15.80px;background:#cbcbcb;border-radius:3px 3px 0 0;"></div>
<div class="b" style="left:437.20px;top:218.40px;width:65.20px;height:15.80px;background:#cbcbcb;border-radius:3px 3px 0 0;"></div>
<div class="b" style="left:503.90px;top:218.40px;width:65.10px;height:15.80px;background:#cbcbcb;border-radius:3px 3px 0 0;"></div>
<div class="t" style="top:219.08px;font-size:9px;line-height:14px;color:#333;font-weight:700;left:241.80px;transform:scaleX(0.968);transform-origin:0 50%;">Transact<u>i</u>ons</div>
<div class="t" style="top:219.22px;font-size:8.9px;line-height:14px;color:#444;left:185.60px;width:300px;text-align:center;-webkit-text-stroke:0.18px #444;">Contacts</div>
<div class="t" style="top:219.22px;font-size:8.9px;line-height:14px;color:#444;left:252.30px;width:300px;text-align:center;-webkit-text-stroke:0.18px #444;">To <u>D</u>o's</div>
<div class="t" style="top:219.22px;font-size:8.9px;line-height:14px;color:#444;left:319.80px;width:300px;text-align:center;-webkit-text-stroke:0.18px #444;">Note<u>s</u></div>
<div class="t" style="top:219.22px;font-size:8.9px;line-height:14px;color:#444;left:386.50px;width:300px;text-align:center;-webkit-text-stroke:0.18px #444;">Sent E<u>m</u>ail</div>
<div class="b" style="left:237.60px;top:234.40px;width:748.80px;height:344.60px;background:#fff;"></div>
<div class="t" style="top:239.94px;font-size:7.1px;line-height:14px;color:#666;left:246.00px;transform:scaleX(0.93);transform-origin:0 50%;-webkit-text-stroke:0.18px #666;">SHOW</div>
<div class="b" style="left:276.90px;top:238.00px;width:102.90px;height:17.00px;background:linear-gradient(#fff 30%,#f0f0f0);border:1px solid #d6d6d6;border-radius:2.5px;box-sizing:border-box;"></div>
<div class="t" style="top:239.12px;font-size:8.9px;line-height:14px;color:#1e1e1e;left:279.70px;-webkit-text-stroke:0.18px #1e1e1e;">All Transactions</div>
<svg class="b" style="left:367.80px;top:245.00px" width="6" height="3.2" viewBox="0 0 6 3.2"><path d="M0 0H6L3.0 3.2Z" fill="#444"/></svg>
<div class="t" style="top:239.94px;font-size:7.1px;line-height:14px;color:#666;left:390.00px;transform:scaleX(0.93);transform-origin:0 50%;-webkit-text-stroke:0.18px #666;">FILTER BY</div>
<div class="b" style="left:435.60px;top:238.00px;width:135.10px;height:17.00px;background:linear-gradient(#fff 30%,#f0f0f0);border:1px solid #d6d6d6;border-radius:2.5px;box-sizing:border-box;"></div>
<div class="t" style="top:239.12px;font-size:8.9px;line-height:14px;color:#1e1e1e;left:438.40px;-webkit-text-stroke:0.18px #1e1e1e;">All</div>
<svg class="b" style="left:558.70px;top:245.00px" width="6" height="3.2" viewBox="0 0 6 3.2"><path d="M0 0H6L3.0 3.2Z" fill="#444"/></svg>
<div class="t" style="top:239.94px;font-size:7.1px;line-height:14px;color:#666;left:581.40px;transform:scaleX(0.93);transform-origin:0 50%;-webkit-text-stroke:0.18px #666;">DATE</div>
<div class="b" style="left:607.90px;top:238.00px;width:116.80px;height:17.00px;background:linear-gradient(#fff 30%,#f0f0f0);border:1px solid #d6d6d6;border-radius:2.5px;box-sizing:border-box;"></div>
<div class="t" style="top:239.12px;font-size:8.9px;line-height:14px;color:#1e1e1e;left:610.70px;-webkit-text-stroke:0.18px #1e1e1e;">This Fiscal Year</div>
<svg class="b" style="left:712.70px;top:245.00px" width="6" height="3.2" viewBox="0 0 6 3.2"><path d="M0 0H6L3.0 3.2Z" fill="#444"/></svg>
<div class="t" style="top:241.52px;font-size:8.9px;line-height:14px;color:#555;left:735.00px;-webkit-text-stroke:0.18px #555;">01/01/2024 - 12/31/2024</div>
<div class="t" style="top:261.07px;font-size:7.3px;line-height:14px;color:#8a8a8a;letter-spacing:0.05px;left:250.40px;">TYPE</div>
<div class="t" style="top:261.07px;font-size:7.3px;line-height:14px;color:#8a8a8a;letter-spacing:0.05px;left:395.10px;">NUM</div>
<div class="t" style="top:261.07px;font-size:7.3px;line-height:14px;color:#8a8a8a;letter-spacing:0.05px;left:540.40px;">DATE</div>
<div class="t" style="top:261.07px;font-size:7.3px;line-height:14px;color:#8a8a8a;letter-spacing:0.05px;left:686.00px;">ACCOUNT</div>
<div class="t" style="top:261.07px;font-size:7.3px;line-height:14px;color:#8a8a8a;letter-spacing:0.05px;left:831.00px;">AMOUNT</div>
<svg class="b" style="left:566.00px;top:266.40px" width="5.6" height="3" viewBox="0 0 5.6 3"><path d="M0 0H5.6L2.8 3Z" fill="#666"/></svg>
<svg class="b" style="left:240.00px;top:260.00px" width="748" height="292" viewBox="0 0 748 292"><rect x="4.50" y="14.40" width="735.40" height="273.40" fill="#c8c8c8" /><rect x="4.50" y="14.30" width="735.40" height="1.10" fill="#b4b4b4" /><rect x="5.30" y="15.40" width="733.90" height="271.60" fill="#fff" /><rect x="5.30" y="15.30" width="733.90" height="16.72" fill="#cfe8cf" /><rect x="5.30" y="32.02" width="733.90" height="16.72" fill="#e1edfc" /><rect x="5.30" y="65.46" width="733.90" height="16.72" fill="#e1edfc" /><rect x="5.30" y="98.90" width="733.90" height="16.72" fill="#e1edfc" /><rect x="5.30" y="132.34" width="733.90" height="16.72" fill="#e1edfc" /><rect x="5.30" y="165.78" width="733.90" height="16.72" fill="#e1edfc" /><rect x="5.30" y="199.22" width="733.90" height="16.72" fill="#e1edfc" /><rect x="5.30" y="232.66" width="733.90" height="16.72" fill="#e1edfc" /><rect x="5.30" y="266.10" width="733.90" height="16.72" fill="#e1edfc" /><rect x="149.90" y="15.30" width="1.20" height="271.70" fill="#cdcdcd" /><rect x="149.90" y="2.80" width="1.20" height="1.20" fill="#8a8a8a" /><rect x="149.90" y="5.90" width="1.20" height="1.20" fill="#8a8a8a" /><rect x="149.90" y="9.00" width="1.20" height="1.20" fill="#8a8a8a" /><rect x="295.20" y="15.30" width="1.20" height="271.70" fill="#cdcdcd" /><rect x="295.20" y="2.80" width="1.20" height="1.20" fill="#8a8a8a" /><rect x="295.20" y="5.90" width="1.20" height="1.20" fill="#8a8a8a" /><rect x="295.20" y="9.00" width="1.20" height="1.20" fill="#8a8a8a" /><rect x="440.80" y="15.30" width="1.20" height="271.70" fill="#cdcdcd" /><rect x="440.80" y="2.80" width="1.20" height="1.20" fill="#8a8a8a" /><rect x="440.80" y="5.90" width="1.20" height="1.20" fill="#8a8a8a" /><rect x="440.80" y="9.00" width="1.20" height="1.20" fill="#8a8a8a" /><rect x="585.80" y="15.30" width="1.20" height="271.70" fill="#cdcdcd" /><rect x="585.80" y="2.80" width="1.20" height="1.20" fill="#8a8a8a" /><rect x="585.80" y="5.90" width="1.20" height="1.20" fill="#8a8a8a" /><rect x="585.80" y="9.00" width="1.20" height="1.20" fill="#8a8a8a" /><rect x="5" y="32" width="738" height="17" fill="none" stroke="#f2101c" stroke-width="2"/><rect x="4.199999999999989" y="49" width="739.8" height="18" fill="none" stroke="#ff6c0c" stroke-width="2.1"/></svg>
<div class="t" style="top:276.92px;font-size:8.9px;line-height:14px;color:#1e1e1e;left:247.80px;-webkit-text-stroke:0.18px #1e1e1e;">Invoice</div>
<div class="t" style="top:276.92px;font-size:8.9px;line-height:14px;color:#1e1e1e;left:392.90px;-webkit-text-stroke:0.18px #1e1e1e;">1103</div>
<div class="t" style="top:276.92px;font-size:8.9px;line-height:14px;color:#1e1e1e;left:538.20px;-webkit-text-stroke:0.18px #1e1e1e;">12/15/2024</div>
<div class="t" style="top:276.92px;font-size:8.9px;line-height:14px;color:#1e1e1e;left:683.80px;transform:scaleX(0.985);transform-origin:0 50%;-webkit-text-stroke:0.18px #1e1e1e;">11000 · Accounts Receivable</div>
<div class="t" style="top:276.92px;font-size:8.9px;line-height:14px;color:#1e1e1e;right:20.80px;text-align:right;-webkit-text-stroke:0.18px #1e1e1e;">10.00</div>
<div class="t" style="top:293.64px;font-size:8.9px;line-height:14px;color:#1e1e1e;left:247.80px;-webkit-text-stroke:0.18px #1e1e1e;">Credit Memo</div>
<div class="t" style="top:293.64px;font-size:8.9px;line-height:14px;color:#1e1e1e;left:392.90px;-webkit-text-stroke:0.18px #1e1e1e;">1105</div>
<div class="t" style="top:293.64px;font-size:8.9px;line-height:14px;color:#1e1e1e;left:538.20px;-webkit-text-stroke:0.18px #1e1e1e;">12/15/2024</div>
<div class="t" style="top:293.64px;font-size:8.9px;line-height:14px;color:#1e1e1e;left:683.80px;transform:scaleX(0.985);transform-origin:0 50%;-webkit-text-stroke:0.18px #1e1e1e;">11000 · Accounts Receivable</div>
<div class="t" style="top:293.64px;font-size:8.9px;line-height:14px;color:#1e1e1e;right:20.80px;text-align:right;-webkit-text-stroke:0.18px #1e1e1e;">-20.00</div>
<div class="t" style="top:310.36px;font-size:8.9px;line-height:14px;color:#1e1e1e;left:247.80px;-webkit-text-stroke:0.18px #1e1e1e;">General Journal</div>
<div class="t" style="top:310.36px;font-size:8.9px;line-height:14px;color:#1e1e1e;left:392.90px;transform:scaleX(0.94);transform-origin:0 50%;-webkit-text-stroke:0.18px #1e1e1e;">FAM2012</div>
<div class="t" style="top:310.36px;font-size:8.9px;line-height:14px;color:#1e1e1e;left:538.20px;-webkit-text-stroke:0.18px #1e1e1e;">12/15/2024</div>
<div class="t" style="top:310.36px;font-size:8.9px;line-height:14px;color:#1e1e1e;left:683.80px;transform:scaleX(0.985);transform-origin:0 50%;-webkit-text-stroke:0.18px #1e1e1e;">11000 · Accounts Receivable</div>
<div class="t" style="top:310.36px;font-size:8.9px;line-height:14px;color:#1e1e1e;right:20.80px;text-align:right;-webkit-text-stroke:0.18px #1e1e1e;">10.00</div>
<div class="b" style="left:244.00px;top:554.60px;width:119.60px;height:19.60px;background:linear-gradient(#fdfdfd,#ececec);border:1px solid #d2d2d2;border-radius:2px;box-sizing:border-box;"></div>
<div class="b" style="left:351.00px;top:556.00px;width:1.00px;height:16.60px;background:#d8d8d8;"></div>
<div class="t" style="top:557.58px;font-size:9px;line-height:14px;color:#4c4c4c;font-weight:700;left:147.50px;width:300px;text-align:center;transform:scaleX(0.965);transform-origin:50% 50%;">Manage Transactions</div>
<svg class="b" style="left:353.90px;top:562.40px" width="5.8" height="3.8" viewBox="0 0 5.8 3.8"><path d="M0 0H5.8L2.9 3.8Z" fill="#111"/></svg>
<div class="b" style="left:369.30px;top:554.60px;width:119.40px;height:19.60px;background:linear-gradient(#fdfdfd,#ececec);border:1px solid #d2d2d2;border-radius:2px;box-sizing:border-box;"></div>
<div class="b" style="left:476.30px;top:556.00px;width:1.00px;height:16.60px;background:#d8d8d8;"></div>
<div class="t" style="top:557.58px;font-size:9px;line-height:14px;color:#4c4c4c;font-weight:700;left:272.80px;width:300px;text-align:center;transform:scaleX(0.965);transform-origin:50% 50%;">Run Reports</div>
<svg class="b" style="left:479.10px;top:562.40px" width="5.8" height="3.8" viewBox="0 0 5.8 3.8"><path d="M0 0H5.8L2.9 3.8Z" fill="#111"/></svg>
</body></html>
